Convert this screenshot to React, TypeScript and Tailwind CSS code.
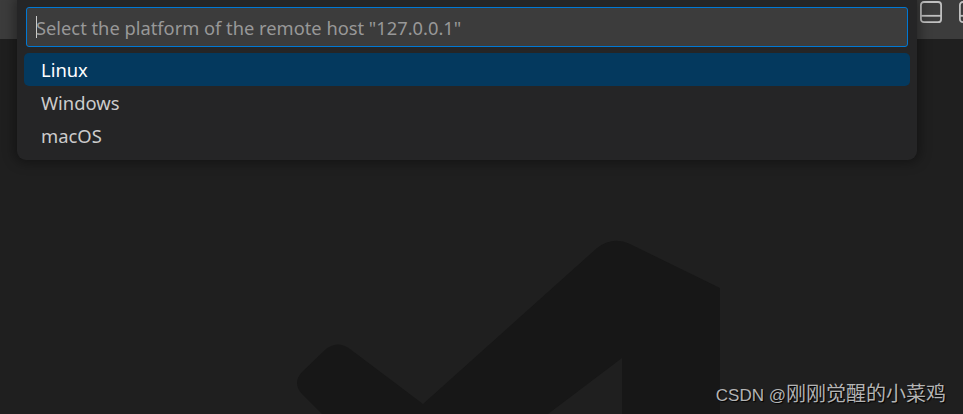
const platforms = ['Linux', 'Windows', 'macOS'];

const PanelIcon = () => (
  <svg width="24" height="24" viewBox="0 0 24 24" fill="none" stroke="#c0c0c0" strokeWidth="1.8">
    <rect x="1.9" y="2" width="20.2" height="20.2" rx="3" />
    <path d="M2 15.8H22" />
  </svg>
);

const Watermark = () => (
  <svg className="absolute left-0 top-0" width="963" height="414" viewBox="0 0 963 414" fill="#171717">
    <path d="M720 288L630 244Q613 236 597 248L423 404L350 349Q338 340 326 349L302 372Q292 383 302 394L322 414H548L622 358V414H720Z" />
  </svg>
);

export default function App() {
  return (
    <div className="relative w-[963px] h-[414px] overflow-hidden bg-[#1f1f1f] font-['Noto_Sans',sans-serif]">
      <Watermark />
      <div className="relative flex justify-end items-start gap-[15px] h-[39px] bg-[#3c3c3c] -mr-[19px]">
        <PanelIcon />
        <PanelIcon />
      </div>
      <div className="absolute left-[17px] top-0 w-[900px] h-[160px] bg-[#252526] rounded-b-[9px] shadow-[0_0_12px_3px_rgba(0,0,0,0.36)] pt-[7px] px-[7px]">
        <div className="mx-[2px] h-[40px] bg-[#3c3c3c] border border-[#0078d4] rounded-[3px] flex items-center pl-[9px]">
          <span className="w-px h-[22px] bg-[#cccccc]" />
          <span className="pt-[2px] text-[18.3px] leading-none text-[#989898] whitespace-nowrap -ml-px">
            Select the platform of the remote host "127.0.0.1"
          </span>
        </div>
        <ul className="mt-[6px]">
          {platforms.map((name, i) => (
            <li
              key={name}
              className={
                i === 0
                  ? 'h-[33px] flex items-center pl-[17px] rounded-[5px] bg-[#04395e] text-white text-[18.4px]'
                  : 'h-[33px] flex items-center pl-[17px] text-[#cccccc] text-[18.4px]'
              }
            >
              <span className="pt-px">{name}</span>
            </li>
          ))}
        </ul>
      </div>
      <div className="absolute right-[17px] bottom-[5px] text-[17px] leading-[26px] text-[#b4b4b4] whitespace-nowrap font-['Liberation_Sans','Noto_Sans_CJK_SC',sans-serif] [text-shadow:1px_1px_1px_#000]">
        CSDN @<span className="text-[20px]">刚刚觉醒的小菜鸡</span>
      </div>
    </div>
  );
}
